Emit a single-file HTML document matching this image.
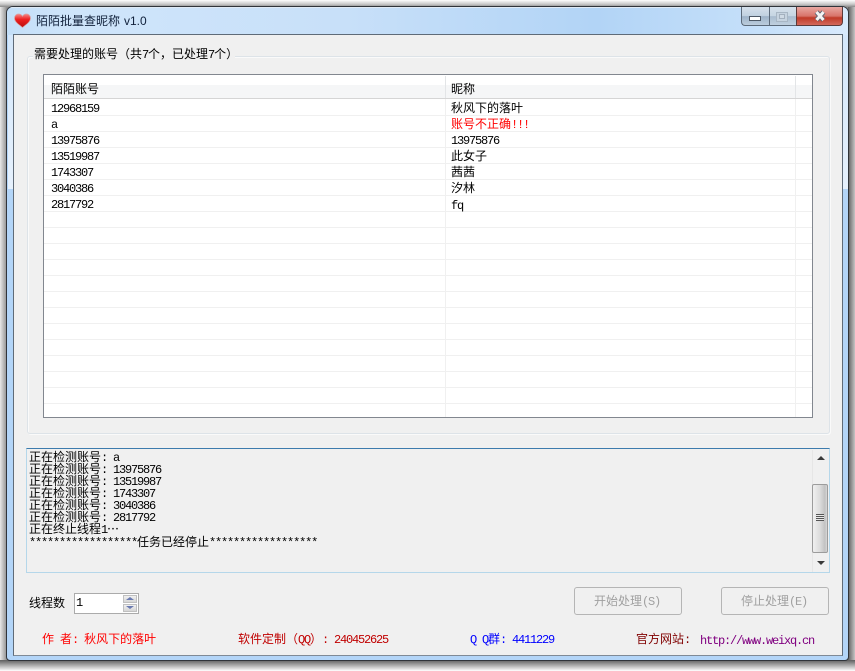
<!DOCTYPE html>
<html><head><meta charset="utf-8"><style>
html,body{margin:0;padding:0;width:855px;height:671px;overflow:hidden;background:#fff}
*{box-sizing:border-box}
.a{position:absolute}
.t{position:absolute;white-space:pre;font:12px/12px "WenQuanYi Zen Hei","Noto Sans CJK SC",sans-serif;color:#000}
.t b,.m{font:400 12px/12px "Liberation Mono",monospace !important;letter-spacing:-1.2px}
.row{position:absolute;left:44px;width:768px;height:1px;background:#f0f0f0}
</style></head><body>
<!-- shadow -->
<div class="a" style="left:0;top:0;width:855px;height:671px;background:#8c8c8c"></div>
<div class="a" style="left:0;top:0;width:7px;height:671px;background:linear-gradient(90deg,#e8e8e8,#8c8c8c)"></div>
<div class="a" style="left:848px;top:0;width:7px;height:671px;background:linear-gradient(90deg,#5e5e5e,#c4c4c4)"></div>
<div class="a" style="left:0;top:0;width:855px;height:7px;background:linear-gradient(#fff,#c8c8c8 60%,#8a8a8a)"></div>
<div class="a" style="left:0;top:660px;width:855px;height:11px;background:linear-gradient(#5e5e5e,#fff)"></div>
<!-- window -->
<div class="a" style="left:6px;top:6px;width:843px;height:655px;border:1px solid #30343a;border-radius:7px 7px 4px 4px;background:#b3d5f8;overflow:hidden">
 <div class="a" style="left:0;top:0;width:841px;height:28px;background:linear-gradient(90deg,#c4dff8 0,#cfe5fa 8%,#c8e0f9 40%,#b2d4f6 70%,#c6e0fa 90%,#d9eafc 100%)"></div>
 <div class="a" style="left:0;top:0;width:841px;height:1px;background:#dfeaf5"></div>
 <div class="a" style="left:1px;top:28px;width:6px;height:154px;background:linear-gradient(#d4e7fb,#e6f1fd)"></div>
 <div class="a" style="left:834px;top:28px;width:7px;height:154px;background:linear-gradient(#d4e7fb,#e6f1fd)"></div>
</div>
<!-- client -->
<div class="a" style="left:13px;top:34px;width:830px;height:622px;background:#f0f0f0;border:1px solid #5f6b78;border-bottom-color:#7f8a96"></div>

<!-- heart icon -->
<svg class="a" style="left:14px;top:13px" width="17" height="15" viewBox="0 0 17 15"><defs><linearGradient id="h" x1="0" y1="0" x2="0" y2="1"><stop offset="0" stop-color="#f58a8a"/><stop offset=".4" stop-color="#ee2020"/><stop offset="1" stop-color="#b80c0c"/></linearGradient></defs><path d="M8.500 14.500C5 11.500 .5 9 .5 5.200 .5 2.600 2.400 1 4.600 1c1.700 0 3 .8 3.900 2.200C9.400 1.800 10.700 1 12.400 1c2.200 0 4.100 1.600 4.100 4.200 0 3.800-4.500 6.300-8 9.300z" fill="url(#h)" stroke="#d9a0a0" stroke-width=".7"/></svg>
<div class="t" style="left:36px;top:15px;color:#10203a">陌陌批量查昵称</div>
<div class="t" style="left:124px;top:15px;color:#10203a;font:12px/12px 'Liberation Sans',sans-serif">v1.0</div>

<!-- caption buttons -->
<div class="a" style="left:741px;top:7px;width:28px;height:19px;border:1px solid #5c6a7a;border-top:0;border-right:0;border-radius:0 0 0 4px;background:linear-gradient(#d6e1ec,#c0d0e0 50%,#9db2c8 52%,#bccddd)"></div>
<div class="a" style="left:769px;top:7px;width:27px;height:19px;border:1px solid #5c6a7a;border-top:0;border-right:0;background:linear-gradient(#d6e1ec,#c6d5e3 50%,#a9bccf 52%,#c0d0df)"></div>
<div class="a" style="left:796px;top:7px;width:47px;height:19px;border:1px solid #5c3a3a;border-top:0;border-radius:0 0 4px 0;background:linear-gradient(#e9a8a2,#d8746a 50%,#c03a28 60%,#d3695c)"></div>
<div class="a" style="left:749px;top:16px;width:12px;height:5px;background:#fff;border:1px solid #4d5866"></div>
<div class="a" style="left:776px;top:12px;width:12px;height:10px;border:1px solid #a8b6c4;background:#c6d3e0"></div>
<div class="a" style="left:779px;top:14px;width:6px;height:5px;border:1px solid #a3b0be;background:#cfdae5"></div>
<svg class="a" style="left:813px;top:10px" width="14" height="12" viewBox="0 0 14 12"><path d="M3.500 2L10.500 10M10.500 2L3.500 10" stroke="#59616e" stroke-width="4.800"/><path d="M3.500 2L10.500 10M10.500 2L3.500 10" stroke="#f4f4f4" stroke-width="3"/></svg>

<!-- group box -->
<div class="a" style="left:27px;top:56px;width:803px;height:378px;border:1px solid #dde3e8;border-radius:3px;box-shadow:inset 1px 1px 0 #fafafa,1px 1px 0 #fafafa"></div>
<div class="a" style="left:33px;top:48px;width:202px;height:14px;background:#f0f0f0"></div>
<div class="t" style="left:34px;top:48px">需要处理的账号（共<b>7</b>个，已处理<b>7</b>个）</div>

<!-- list -->
<div class="a" style="left:43px;top:74px;width:770px;height:344px;background:#fff;border:1px solid #82878f"></div>
<div class="a" style="left:44px;top:85px;width:768px;height:13px;background:#f5f6f7"></div>
<div class="a" style="left:44px;top:98px;width:768px;height:1px;background:#d5d5d5"></div>
<div class="a" style="left:445px;top:76px;width:1px;height:22px;background:#e3e5e7"></div>
<div class="a" style="left:795px;top:76px;width:1px;height:22px;background:#e3e5e7"></div>
<div class="a" style="left:445px;top:99px;width:1px;height:318px;background:#f0f0f0"></div>
<div class="a" style="left:795px;top:99px;width:1px;height:318px;background:#f0f0f0"></div>
<div class="row" style="top:115px"></div><div class="row" style="top:131px"></div><div class="row" style="top:147px"></div><div class="row" style="top:163px"></div><div class="row" style="top:179px"></div><div class="row" style="top:195px"></div><div class="row" style="top:211px"></div><div class="row" style="top:227px"></div><div class="row" style="top:243px"></div><div class="row" style="top:259px"></div><div class="row" style="top:275px"></div><div class="row" style="top:291px"></div><div class="row" style="top:307px"></div><div class="row" style="top:323px"></div><div class="row" style="top:339px"></div><div class="row" style="top:355px"></div><div class="row" style="top:371px"></div><div class="row" style="top:387px"></div><div class="row" style="top:403px"></div>

<div class="t" style="left:51px;top:83px">陌陌账号</div>
<div class="t" style="left:451px;top:83px">昵称</div>
<div class="t m" style="left:51px;top:103px">12968159</div>
<div class="t m" style="left:51px;top:119px">a</div>
<div class="t m" style="left:51px;top:135px">13975876</div>
<div class="t m" style="left:51px;top:151px">13519987</div>
<div class="t m" style="left:51px;top:167px">1743307</div>
<div class="t m" style="left:51px;top:183px">3040386</div>
<div class="t m" style="left:51px;top:199px">2817792</div>
<div class="t" style="left:451px;top:102px">秋风下的落叶</div>
<div class="t" style="left:451px;top:118px;color:#f00">账号不正确<b>!!!</b></div>
<div class="t m" style="left:451px;top:135px">13975876</div>
<div class="t" style="left:451px;top:150px">此女子</div>
<div class="t" style="left:451px;top:166px">茜茜</div>
<div class="t" style="left:451px;top:182px">汐林</div>
<div class="t m" style="left:451px;top:200px">fq</div>

<!-- log -->
<div class="a" style="left:26px;top:448px;width:804px;height:125px;border:1px solid #b5d7ea;border-top-color:#3d7bad;background:#f0f0f0"></div>
<div class="t" style="left:29px;top:451px">正在检测账号<span class="m">: a</span></div>
<div class="t" style="left:29px;top:463px">正在检测账号<span class="m">: 13975876</span></div>
<div class="t" style="left:29px;top:475px">正在检测账号<span class="m">: 13519987</span></div>
<div class="t" style="left:29px;top:487px">正在检测账号<span class="m">: 1743307</span></div>
<div class="t" style="left:29px;top:499px">正在检测账号<span class="m">: 3040386</span></div>
<div class="t" style="left:29px;top:511px">正在检测账号<span class="m">: 2817792</span></div>
<div class="t" style="left:29px;top:523px">正在终止线程<span class="m">1</span>…</div>
<div class="t" style="left:29px;top:536px"><span class="m">******************</span>任务已经停止<span class="m">******************</span></div>
<!-- scrollbar -->
<div class="a" style="left:812px;top:450px;width:17px;height:122px;background:#f0f0f0;border-left:1px solid #e6e6e6"></div>
<div class="a" style="left:817px;top:456px;width:0;height:0;border:4px solid transparent;border-top:0;border-bottom:4px solid #3a3a3a"></div>
<div class="a" style="left:817px;top:561px;width:0;height:0;border:4px solid transparent;border-bottom:0;border-top:4px solid #3a3a3a"></div>
<div class="a" style="left:812px;top:484px;width:16px;height:69px;border:1px solid #9c9c9c;border-radius:2px;background:linear-gradient(90deg,#f0f0f0,#dcdcdc 50%,#c2c2c2 85%,#d8d8d8)"></div>
<div class="a" style="left:816px;top:514px;width:8px;height:7px;background:repeating-linear-gradient(#555 0,#555 1px,#e8e8e8 1px,#e8e8e8 2px)"></div>

<!-- bottom controls -->
<div class="t" style="left:29px;top:597px">线程数</div>
<div class="a" style="left:74px;top:593px;width:65px;height:21px;border:1px solid #ababab;background:#fff"></div>
<div class="t m" style="left:76px;top:597px">1</div>
<div class="a" style="left:123px;top:595px;width:14px;height:8px;background:linear-gradient(#f0f0f0,#d6d6d6);border:1px solid #c0c0c0"></div>
<div class="a" style="left:123px;top:604px;width:14px;height:8px;background:linear-gradient(#f0f0f0,#d6d6d6);border:1px solid #c0c0c0"></div>
<div class="a" style="left:126px;top:597px;width:0;height:0;border:4px solid transparent;border-top:0;border-bottom:3px solid #6a7ab0"></div>
<div class="a" style="left:126px;top:606px;width:0;height:0;border:4px solid transparent;border-bottom:0;border-top:3px solid #6a7ab0"></div>

<div class="a" style="left:574px;top:587px;width:108px;height:28px;border:1px solid #b5b5b5;border-radius:3px;background:#f0f0f0"></div>
<div class="t" style="left:594px;top:595px;color:#a0a0a0">开始处理<span class="m">(S)</span></div>
<div class="a" style="left:721px;top:587px;width:108px;height:28px;border:1px solid #b5b5b5;border-radius:3px;background:#f0f0f0"></div>
<div class="t" style="left:741px;top:595px;color:#a0a0a0">停止处理<span class="m">(E)</span></div>

<!-- footer -->
<div class="t" style="left:42px;top:633px;color:#f00">作<span class="m"> </span>者<span class="m">: </span>秋风下的落叶</div>
<div class="t" style="left:238px;top:633px;color:#c00000">软件定制（<span class="m">QQ</span>）<span class="m">: 240452625</span></div>
<div class="t" style="left:470px;top:633px;color:#00f"><span class="m">Q Q</span>群<span class="m">: 4411229</span></div>
<div class="t" style="left:636px;top:633px;color:#800000">官方网站<span class="m">:</span></div>
<div class="t m" style="left:700px;top:635px;color:#800080">http://www.weixq.cn</div>
</body></html>
